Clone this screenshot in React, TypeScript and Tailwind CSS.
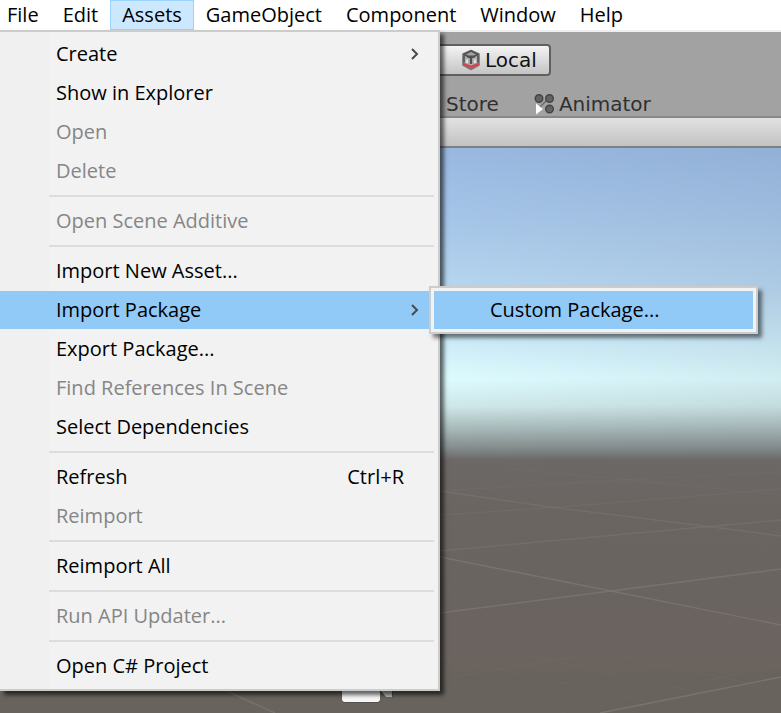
import React from "react";

type Entry = {
  label: string;
  disabled?: boolean;
  shortcut?: string;
  submenu?: boolean;
  children?: string[];
};

const menuTitles = ["File", "Edit", "Assets", "GameObject", "Component", "Window", "Help"];

const sections: Entry[][] = [
  [
    { label: "Create", submenu: true },
    { label: "Show in Explorer" },
    { label: "Open", disabled: true },
    { label: "Delete", disabled: true },
  ],
  [{ label: "Open Scene Additive", disabled: true }],
  [
    { label: "Import New Asset..." },
    { label: "Import Package", submenu: true, children: ["Custom Package..."] },
    { label: "Export Package..." },
    { label: "Find References In Scene", disabled: true },
    { label: "Select Dependencies" },
  ],
  [{ label: "Refresh", shortcut: "Ctrl+R" }, { label: "Reimport", disabled: true }],
  [{ label: "Reimport All" }],
  [{ label: "Run API Updater...", disabled: true }],
  [{ label: "Open C# Project" }],
];

function Chevron() {
  return (
    <svg width="10" height="14" viewBox="0 0 10 14" fill="none" stroke="#4a4a4a" strokeWidth="2" aria-hidden="true">
      <path d="M2 2 7 7 2 12" />
    </svg>
  );
}

function CubeIcon() {
  return (
    <svg width="20" height="22" viewBox="0 0 20 22" fill="none" aria-hidden="true">
      <path d="M10 1.500 18 5v11l-8 4.500L2 16V5Z" fill="#b0b0b0" stroke="#777" strokeWidth="1.600" strokeLinejoin="round" />
      <path d="M3 5.500 10 2l7 3.500L10 9Z" fill="#a2a2a2" stroke="#505050" strokeWidth="1.600" strokeLinejoin="round" />
      <path d="M6 7.500h8M10 7.500V15" stroke="#505050" strokeWidth="2.200" />
      <path d="M3 6.500v7M17 6.500v7" stroke="#5a5a5a" strokeWidth="1.800" />
      <path d="M6 10.500v3.500M14 10.500v3.500" stroke="#e2e2e2" strokeWidth="2" />
      <path d="m2 13.500 8 3 8-3V16l-8 3.500L2 16Z" fill="#d8434f" />
    </svg>
  );
}

function AnimatorIcon() {
  return (
    <svg width="22" height="22" viewBox="0 0 22 22" aria-hidden="true">
      <path d="M5 16 16 5" stroke="#6b6b6b" strokeWidth="1.5" />
      <g fill="#626262" stroke="#444" strokeWidth="1.4">
        <circle cx="6" cy="5.500" r="3.800" />
        <circle cx="16.500" cy="5.500" r="3.800" />
        <circle cx="16.500" cy="16" r="3.800" />
      </g>
      <path d="M3 10.500 10 16l-7 5.500Z" fill="#fff" />
    </svg>
  );
}

function SceneDrawing() {
  return (
    <svg
      className="absolute inset-0 h-full w-full"
      viewBox="0 148 781 565"
      preserveAspectRatio="xMinYMin slice"
      fill="none"
      aria-hidden="true"
    >
      <g stroke="#7b7874" strokeWidth="1.4">
        <path d="M440 613 611 591 781 569" opacity=".75" />
        <path d="M440 557 611 591 781 625" opacity=".75" />
        <path d="M600 713 781 677" opacity=".9" />
        <path d="M440 551 781 520" opacity=".5" />
        <path d="M440 491 550 507 704 526 781 536" opacity=".5" />
        <path d="M440 515 560 507 781 489" opacity=".3" />
        <path d="M440 491 640 479 781 472" opacity=".2" />
        <path d="M510 469 640 481 781 495" opacity=".2" />
        <path d="M220 688 275 713" opacity=".7" />
        <path d="M440 679 580 656M440 708 660 664M560 713 781 664" opacity=".15" />
        <path d="M440 656 700 713M530 656 781 710M620 656 781 690" opacity=".15" />
      </g>
      <path d="M325 690h16l1 11q1 2 3 2h32q3 0 3-3v-7l5 4h8v-9Z" fill="#4c4844" opacity=".7" />
      <path d="M342 685h38v14q0 3-3 3h-32q-3 0-3-3Z" fill="#f7f7f7" />
      <path d="m380 690 12-5v12h-6Z" fill="#bcbcbc" />
    </svg>
  );
}

function MenuRow({ entry }: { entry: Entry }) {
  return (
    <li className="relative" role="none">
      <button
        type="button"
        role="menuitem"
        disabled={entry.disabled}
        aria-haspopup={entry.submenu ? "menu" : undefined}
        aria-expanded={entry.children ? true : undefined}
        className={`flex h-[38px] w-full items-center justify-between pr-[34px] pl-14 text-left text-black disabled:text-[#868686] ${
          entry.children ? "bg-[#91c9f7]" : ""
        }`}
      >
        <span>{entry.label}</span>
        {entry.shortcut && <span>{entry.shortcut}</span>}
        {entry.submenu && (
          <span className="-mr-4">
            <Chevron />
          </span>
        )}
      </button>
      {entry.children && (
        <ul
          role="menu"
          className="absolute -top-[5px] left-[429px] w-[329px] border-2 border-[#cccccc] bg-[#f2f2f2] p-[3px] shadow-[4px_4px_4px_rgba(0,0,0,0.5)]"
        >
          {entry.children.map((c) => (
            <li key={c} role="none">
              <button type="button" role="menuitem" className="flex h-[38px] w-full items-center bg-[#91c9f7] pl-14 text-black">
                {c}
              </button>
            </li>
          ))}
        </ul>
      )}
    </li>
  );
}

export default function App() {
  return (
    <div className="relative flex min-h-screen flex-col overflow-hidden bg-[#a2a2a2] font-[family-name:'Open_Sans','Noto_Sans',sans-serif] text-[20px] leading-7">
      <nav className="flex h-8 items-start border-b-2 border-[#eeeeee] bg-white whitespace-nowrap" role="menubar">
        {menuTitles.map((title) => (
          <button
            key={title}
            type="button"
            role="menuitem"
            className={`h-[30px] border px-[11px] text-black first:pl-[6px] ${
              title === "Assets" ? "border-[#99d1ff] bg-[#cce8ff]" : "border-transparent"
            }`}
          >
            {title}
          </button>
        ))}
      </nav>

      <div className="font-[family-name:'DejaVu_Sans',sans-serif] text-[#111111]">
        <div className="flex h-14 items-center pl-[430px]">
          <button
            type="button"
            className="flex h-8 items-center gap-1 rounded border-2 border-[#606060] bg-linear-to-b from-[#f4f4f4] to-[#c4c4c4] pr-3 pl-[29px]"
          >
            <CubeIcon />
            Local
          </button>
        </div>
        <div className="flex h-7 items-center gap-[34px] pt-1 pl-[446px] text-[#303030]" role="tablist">
          <button type="button" role="tab">
            Store
          </button>
          <button type="button" role="tab" className="flex items-center gap-1">
            <AnimatorIcon />
            Animator
          </button>
        </div>
        <div className="h-8 border-y-2 border-t-[#888888] border-b-[#808080] bg-linear-to-b from-[#e2e2e2] to-[#c2c2c2]" />
      </div>

      <main className="relative flex-1 bg-[linear-gradient(to_bottom,#98b8e1_0px,#a5c5e8_70px,#b8d7ef_145px,#cfeef9_200px,#ddfcff_231px,#cfe8e9_258px,#a9bbbb_280px,#858c8c_300px,#6b6866_312px,#6b6562_360px,#69645f_440px,#6c6360_500px,#68635c_535px,#68635c_100%)]">
        <div className="absolute inset-x-0 top-0 h-[312px] bg-linear-to-r from-transparent from-55% to-[rgba(100,110,130,0.1)]" />
        <SceneDrawing />
      </main>

      <div
        role="menu"
        aria-label="Assets"
        className="absolute top-[30px] left-0 w-[440px] border-t-2 border-r-2 border-b-2 border-[#cccccc] bg-[linear-gradient(to_right,#f0f0f0_49px,#f2f2f2_49px)] pt-[3px] pb-1 shadow-[4px_4px_4px_rgba(0,0,0,0.6)]"
      >
        {sections.map((rows, i) => (
          <React.Fragment key={i}>
            {i > 0 && (
              <div className="flex h-3 items-center pr-1 pl-[49px]">
                <hr className="w-full border-t-2 border-[#dcdcdc]" />
              </div>
            )}
            <ul className="flex flex-col gap-px" role="group">
              {rows.map((entry) => (
                <MenuRow key={entry.label} entry={entry} />
              ))}
            </ul>
          </React.Fragment>
        ))}
      </div>
    </div>
  );
}
